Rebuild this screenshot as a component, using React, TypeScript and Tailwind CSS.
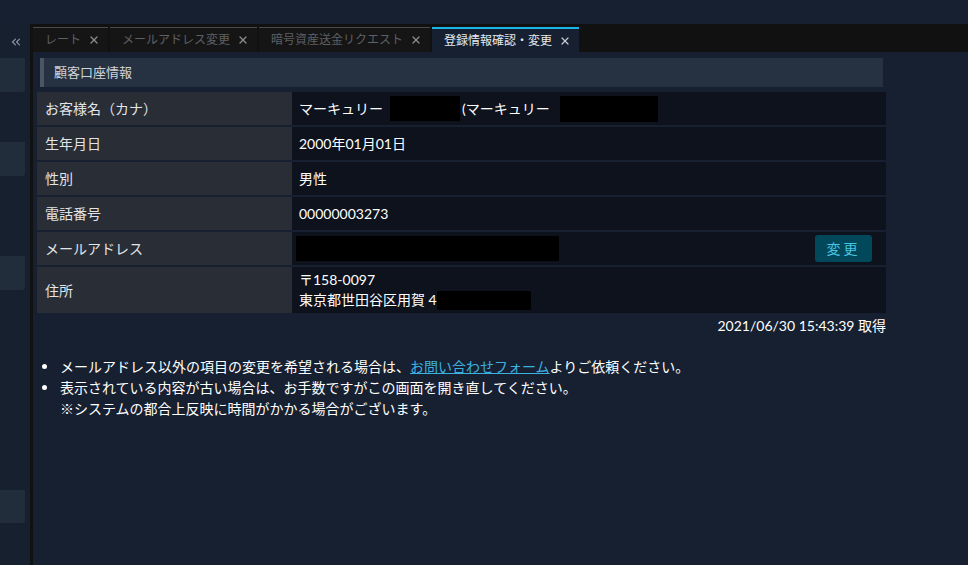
import { X, ChevronsLeft } from "lucide-react";

const font = { fontFamily: "Lato, 'Noto Sans CJK JP', sans-serif" };

const tabs = [
  { label: "レート", w: "w-[75px]" },
  { label: "メールアドレス変更", w: "w-[147px]" },
  { label: "暗号資産送金リクエスト", w: "w-[171px]" },
];

const Redact = ({ w, h = "h-[25px]" }: { w: string; h?: string }) => (
  <span className={`inline-block bg-black align-middle ${w} ${h}`} />
);

const Row = ({ label, children, tall }: { label: string; children: React.ReactNode; tall?: boolean }) => (
  <div className={`flex ${tall ? "h-[46px]" : "h-[33px]"}`}>
    <div className="w-[255px] bg-[#292d35] pl-2 flex items-center text-[14px] text-[#e2e4e8]">{label}</div>
    <div className="flex-1 bg-[#0d121d] pl-1 flex items-center text-[14px] text-white">{children}</div>
  </div>
);

const Dot = () => (
  <span className="w-[18px] shrink-0 flex items-center h-[21px]">
    <span className="w-[5px] h-[5px] rounded-full bg-white" />
  </span>
);

export default function App() {
  return (
    <div className="w-[968px] h-[565px] overflow-hidden bg-[#162031] flex flex-col" style={font}>
      {/* top bar */}
      <div className="h-6 bg-[#172031]" />

      <div className="flex flex-1 min-h-0">
        {/* sidebar */}
        <div className="w-[30px] bg-[#17202f] flex flex-col">
          <div className="h-[34px] flex items-center justify-end pr-[7px] pt-[2px] text-[#8b94a3]">
            <ChevronsLeft size={14} strokeWidth={2} />
          </div>
          <div className="w-[25px] h-[34px] bg-[#222d3c] rounded-br-[3px]" />
          <div className="w-[25px] h-[34px] mt-[50px] bg-[#222d3c] rounded-br-[3px]" />
          <div className="w-[25px] h-[34px] mt-[80px] bg-[#222d3c] rounded-br-[3px]" />
          <div className="w-[25px] h-[33px] mt-[200px] bg-[#222d3c] rounded-br-[3px]" />
        </div>
        <div className="w-[3px] bg-[#111111]" />

        {/* main */}
        <div className="flex-1 flex flex-col">
          {/* tab strip */}
          <div className="h-[28px] bg-[#111111] flex items-end gap-[2px]">
            {tabs.map((t) => (
              <div
                key={t.label}
                className={`${t.w} h-[25px] border-t border-[#4a4a4a] bg-[#151515] flex items-center pl-3 text-[12px] text-[#5d6066]`}
              >
                <span>{t.label}</span>
                <X size={12} strokeWidth={2.5} className="ml-[7px] text-[#8a8d92]" />
              </div>
            ))}
            <div className="w-[147px] h-[25px] border-t-2 border-[#19b5e6] bg-[#162031] flex items-center pl-3 text-[12px] text-[#e6e9ee]">
              <span>登録情報確認・変更</span>
              <X size={12} strokeWidth={2.5} className="ml-[7px] text-[#c5c9cf]" />
            </div>
          </div>

          {/* content */}
          <div className="pl-1 pt-[6px] w-[853px]">
            <div className="mx-[3px] h-[29px] bg-[#263241] border-l-4 border-[#4b5563] flex items-center pl-[10px] text-[13px] text-[#d0d4da]">
              顧客口座情報
            </div>

            <div className="mt-[5px] flex flex-col gap-[2px]">
              <Row label="お客様名（カナ）">
                <span className="ml-[3px]">マーキュリー</span>
                <span className="ml-[7px]"><Redact w="w-[70px]" /></span>
                <span className="ml-[2px]">(マーキュリー</span>
                <span className="ml-[10px]"><Redact w="w-[98px]" h="h-[26px]" /></span>
              </Row>
              <Row label="生年月日"><span className="ml-[3px]">2000年01月01日</span></Row>
              <Row label="性別"><span className="ml-[3px]">男性</span></Row>
              <Row label="電話番号"><span className="ml-[3px]">00000003273</span></Row>
              <Row label="メールアドレス">
                <Redact w="w-[263px]" />
                <button className="ml-auto mr-[14px] h-[27px] w-[57px] rounded-[3px] bg-[#02485b] text-[#48c6e4] text-[14px] tracking-[3px]">
                  変更
                </button>
              </Row>
              <Row label="住所" tall>
                <div className="ml-[3px] leading-[20px]">
                  <div>〒158-0097</div>
                  <div className="flex items-center">
                    東京都世田谷区用賀 4
                    <Redact w="w-[94px]" h="h-[19px]" />
                  </div>
                </div>
              </Row>
            </div>

            <div className="text-right text-[14px] text-white mt-[2px]">2021/06/30 15:43:39 取得</div>

            <ul className="mt-[20px] ml-[5px] text-[14px] text-white leading-[21px]">
              <li className="flex">
                <Dot />
                <span>
                  メールアドレス以外の項目の変更を希望される場合は、
                  <a className="text-[#3cb1e0] underline">お問い合わせフォーム</a>
                  よりご依頼ください。
                </span>
              </li>
              <li className="flex">
                <Dot />
                <span>
                  表示されている内容が古い場合は、お手数ですがこの画面を開き直してください。
                  <br />
                  ※システムの都合上反映に時間がかかる場合がございます。
                </span>
              </li>
            </ul>
          </div>
        </div>
      </div>
    </div>
  );
}
